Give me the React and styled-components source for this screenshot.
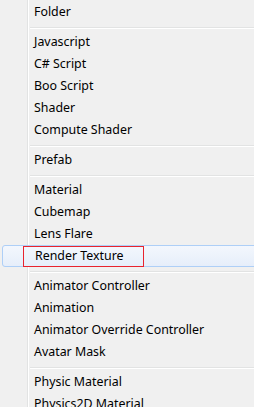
import React from 'react';
import styled, { createGlobalStyle } from 'styled-components';

const GlobalStyle = createGlobalStyle`
  html, body {
    margin: 0;
    padding: 0;
    background: #f0f0f0;
  }
`;

const groups = [
  ['Folder'],
  ['Javascript', 'C# Script', 'Boo Script', 'Shader', 'Compute Shader'],
  ['Prefab'],
  ['Material', 'Cubemap', 'Lens Flare', 'Render Texture'],
  ['Animator Controller', 'Animation', 'Animator Override Controller', 'Avatar Mask'],
  ['Physic Material', 'Physics2D Material'],
];

const active = 'Render Texture';

const App = () => {
  return (
    <>
      <GlobalStyle />
      <Menu>
        {groups.map((group, gi) => (
          <React.Fragment key={gi}>
            {gi > 0 && <Separator />}
            {group.map((label) => (
              <Item key={label} $active={label === active}>
                {label}
                {label === active && <Callout />}
              </Item>
            ))}
          </React.Fragment>
        ))}
      </Menu>
    </>
  );
};

export default App;

const Menu = styled.div`
  width: 254px;
  height: 407px;
  overflow: hidden;
  padding-top: 1px;
  box-sizing: border-box;
  background:
    linear-gradient(to right,
      transparent 27px, #e2e3e3 27px, #e2e3e3 28px,
      #ffffff 28px, #ffffff 29px, transparent 29px),
    #f0f0f0;
  font-family: "Noto Sans", "Noto Sans CJK SC", sans-serif;
  font-size: 12.4px;
  color: #000;
`;

const Item = styled.div`
  position: relative;
  height: 22px;
  line-height: 22px;
  padding-left: 34px;
  white-space: nowrap;
  box-sizing: border-box;
  ${({ $active }) => $active && `
    margin-left: 2px;
    margin-right: -4px;
    padding-left: 32px;
    line-height: 20px;
    border: 1px solid #aecff7;
    border-radius: 3px;
    background: linear-gradient(to bottom, #f3f7fd, #e6eefa);
  `}
`;

const Callout = styled.span`
  position: absolute;
  left: 20px;
  top: 0;
  width: 121px;
  height: 21px;
  box-sizing: border-box;
  border: 1px solid #e8232e;
`;

const Separator = styled.div`
  height: 2px;
  margin: 4px 0 2px 30px;
  border-top: 1px solid #e2e3e3;
  border-bottom: 1px solid #ffffff;
  box-sizing: border-box;
`;
